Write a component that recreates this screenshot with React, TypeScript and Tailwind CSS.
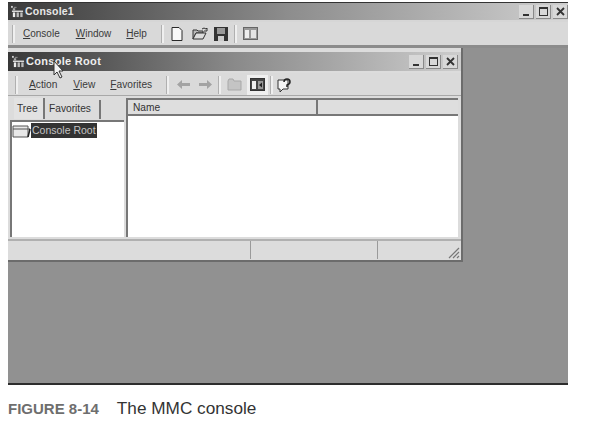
function AppIcon({ className }: { className?: string }) {
  return (
    <svg viewBox="0 0 14 14" className={className} width="13" height="13">
      <rect x="0" y="1" width="2" height="2" fill="#ccc" />
      <rect x="3" y="2" width="3" height="1" fill="#999" />
      <rect x="1" y="6" width="12" height="1.500" fill="#ddd" />
      <rect x="2" y="8" width="2.500" height="5" fill="#eee" />
      <rect x="6" y="8" width="2.500" height="5" fill="#bbb" />
      <rect x="10" y="8" width="2.500" height="5" fill="#bbb" />
      <rect x="2" y="3.500" width="2.500" height="2.500" fill="#aaa" />
    </svg>
  );
}

function WinButtons() {
  return (
    <div className="flex gap-[2px]">
      <div className="w-[15px] h-[14px] bg-[#d8d8d8] border-r border-b border-[#8a8a8a] flex items-end justify-center pb-[2px]">
        <div className="w-[6px] h-[2px] bg-[#333]" />
      </div>
      <div className="w-[15px] h-[14px] bg-[#d8d8d8] border-r border-b border-[#8a8a8a] flex items-center justify-center">
        <div className="w-[9px] h-[9px] border border-t-2 border-[#333]" />
      </div>
      <div className="w-[15px] h-[14px] bg-[#d8d8d8] border-r border-b border-[#8a8a8a] flex items-center justify-center">
        <svg width="9" height="9" viewBox="0 0 9 9"><path d="M1 1l7 7M8 1l-7 7" stroke="#333" strokeWidth="1.800" /></svg>
      </div>
    </div>
  );
}

function Grip() {
  return <div className="w-[2px] h-[18px] bg-[#efefef] border-l border-[#b0b0b0] box-content" />;
}

function Menu({ first, rest, className }: { first: string; rest: string; className?: string }) {
  return (
    <span className={className}>
      <span className="underline">{first}</span>
      {rest}
    </span>
  );
}

function SplitIcon({ dark }: { dark?: boolean }) {
  return (
    <svg width="15" height="13" viewBox="0 0 15 13">
      <rect x="0.500" y="0.500" width="14" height="12" fill={dark ? "#444" : "#999"} stroke={dark ? "#333" : "#666"} />
      <rect x="2" y="3" width="4" height="8" fill="#eee" />
      <rect x="8" y="3" width="5" height="8" fill={dark ? "#999" : "#e4e4e4"} />
      {dark && <path d="M9 7l3-2.500v5z" fill="#222" />}
    </svg>
  );
}

export default function App() {
  return (
    <div className="w-[602px] h-[422px] bg-white font-['Liberation_Sans',sans-serif] overflow-hidden relative">
      <div className="ml-2 mt-[2px] w-[560px] h-[383px] flex flex-col bg-[#d6d6d6]">
        {/* Main title bar */}
        <div className="h-[18px] shrink-0 bg-gradient-to-r from-[#3b3b3b] via-[#8d8d8d] to-[#cfcfcf] flex items-center justify-between pl-[3px] border-t border-[#333]">
          <div className="flex items-center gap-[1px]">
            <AppIcon />
            <span className="text-[10.500px] font-bold text-[#e8e8e8] leading-none tracking-[0.2px]">Console1</span>
          </div>
          <WinButtons />
        </div>
        {/* Main menu and toolbar */}
        <div className="h-[23px] mt-[2px] shrink-0 bg-[#d9d9d9] flex items-center text-[10px] text-[#3a3a3a] pl-[4px]">
          <Grip />
          <Menu first="C" rest="onsole" className="ml-[8px]" />
          <Menu first="W" rest="indow" className="ml-[16px]" />
          <Menu first="H" rest="elp" className="ml-[15px]" />
          <div className="ml-[14px]"><Grip /></div>
          <svg className="ml-[7px]" width="12" height="14" viewBox="0 0 12 14">
            <path d="M1 .5h7l3 3v10H1z" fill="#f8f8f8" stroke="#2a2a2a" />
          </svg>
          <svg className="ml-[9px]" width="16" height="13" viewBox="0 0 16 13">
            <path d="M1 3h4l1 1h5v2H4l-3 6z" fill="#bbb" stroke="#333" />
            <path d="M1 12l3-6h10l-3 6z" fill="#ddd" stroke="#333" />
            <path d="M10 2q2-2 4 0l1-1v3h-3" fill="none" stroke="#333" />
          </svg>
          <svg className="ml-[6px]" width="14" height="14" viewBox="0 0 14 14">
            <rect width="14" height="14" fill="#333" />
            <rect x="3" y="1" width="8" height="6" fill="#999" />
            <rect x="4" y="9" width="6" height="5" fill="#ccc" />
          </svg>
          <div className="ml-[6px]"><Grip /></div>
          <div className="ml-[6px]"><SplitIcon /></div>
        </div>
        <div className="h-[3px] shrink-0 bg-[#8c8c8c]" />
        {/* MDI client */}
        <div className="flex-1 bg-[#919191] border-b-2 border-[#2d2d2d] relative">
          {/* Child window */}
          <div className="w-[455px] h-[214px] bg-[#dcdcdc] border-r-2 border-b-2 border-[#6c6c6c] flex flex-col pt-[4px]">
            <div className="h-[19px] shrink-0 bg-gradient-to-r from-[#383838] via-[#8a8a8a] to-[#cdcdcd] flex items-center justify-between pl-[4px] pr-[3px]">
              <div className="flex items-center gap-[1px]">
                <AppIcon />
                <span className="text-[11px] font-bold text-[#eeeeee] leading-none tracking-[0.3px]">Console Root</span>
              </div>
              <WinButtons />
            </div>
            <div className="h-[23px] mt-[2px] pt-[1px] shrink-0 bg-[#dadada] flex items-center text-[10.200px] text-[#3a3a3a] pl-[7px] border-b border-[#a8a8a8]">
              <Grip />
              <Menu first="A" rest="ction" className="ml-[11px]" />
              <Menu first="V" rest="iew" className="ml-[16px]" />
              <Menu first="F" rest="avorites" className="ml-[15px]" />
              <div className="ml-[14px]"><Grip /></div>
              <svg className="ml-[8px]" width="13" height="9" viewBox="0 0 13 9"><path d="M0 4.500L5 0v3h8v3H5v3z" fill="#a3a3a3" /></svg>
              <svg className="ml-[9px]" width="13" height="9" viewBox="0 0 13 9"><path d="M13 4.500L8 0v3H0v3h8v3z" fill="#a3a3a3" /></svg>
              <div className="ml-[6px]"><Grip /></div>
              <svg className="ml-[6px]" width="15" height="13" viewBox="0 0 15 13">
                <path d="M1 3l1-2h4l1 2h7v9H1z" fill="#c4c4c4" stroke="#a8a8a8" />
              </svg>
              <div className="ml-[5px] w-[21px] h-[20px] bg-[#efefef] flex items-center justify-center"><SplitIcon dark /></div>
              <div className="ml-[2px]"><Grip /></div>
              <svg className="ml-[4px]" width="16" height="16" viewBox="0 0 16 16">
                <path d="M1 3h10v9H6l-3 3v-3H1z" fill="#f4f4f4" stroke="#333" />
                <path d="M7 5q0-3 3-3t3 3q0 2-3 3v2" fill="none" stroke="#222" strokeWidth="1.500" />
              </svg>
            </div>
            <div className="flex-1 flex min-h-0 pl-[2px] pr-[3px]">
              {/* Left pane */}
              <div className="w-[114px] shrink-0 flex flex-col">
                <div className="h-[23px] flex items-end text-[10.200px] text-[#333] pl-[4px] shrink-0">
                  <span className="h-[21px] w-[31px] pt-[3px] pl-[3px] border-r-2 border-[#777] bg-[#e2e2e2]">Tree</span>
                  <span className="h-[19px] w-[56px] pt-[1px] pl-[4px] border-r-2 border-[#777]">Favorites</span>
                </div>
                <div className="flex-1 bg-white border-t-2 border-l-2 border-[#777] mt-[1px] pt-[1px]">
                  <div className="flex items-center">
                    <svg width="19" height="14" viewBox="0 0 19 14" className="shrink-0">
                      <path d="M1 2h15v11H1z" fill="#e8e8e8" stroke="#555" />
                      <path d="M1 5h17" stroke="#555" />
                      <path d="M16 13l2-8" stroke="#222" strokeWidth="1.500" />
                    </svg>
                    <span className="h-[15px] px-[1px] bg-[#333] text-[#c4c4c4] text-[10.500px] leading-[15px]">Console Root</span>
                  </div>
                </div>
              </div>
              {/* Right pane */}
              <div className="flex-1 ml-[2px] mt-[2px] flex flex-col border-t-2 border-l-2 border-[#777] min-w-0">
                <div className="h-[16px] shrink-0 flex text-[10.200px] text-[#333] border-b-2 border-[#777] bg-[#dedede]">
                  <span className="w-[190px] pl-[5px] border-r-2 border-[#777] leading-[15px]">Name</span>
                </div>
                <div className="flex-1 bg-white" />
              </div>
            </div>
            <div className="h-[20px] mt-[2px] shrink-0 mb-[1px] flex gap-[2px] px-[1px] bg-[#dcdcdc] border-t-2 border-[#b0b0b0]">
              <div className="w-[242px] border-r border-[#9a9a9a]" />
              <div className="w-[125px] border-r border-[#9a9a9a]" />
              <div className="flex-1 flex items-end justify-end">
                <svg width="12" height="12" viewBox="0 0 12 12">
                  <path d="M11 1L1 11M11 5l-6 6M11 9l-2 2" stroke="#777" strokeWidth="1.200" />
                </svg>
              </div>
            </div>
          </div>
        </div>
      </div>
      {/* Mouse pointer */}
      <svg className="absolute left-[53px] top-[60px]" width="13" height="19" viewBox="0 0 13 19">
        <path d="M1 1v14l3-3 3 6 2-1-3-6h4z" fill="#f2f2f2" stroke="#333" />
      </svg>
      {/* Caption */}
      <div className="mt-[11px] ml-2 flex items-baseline whitespace-nowrap">
        <span className="text-[15px] font-bold text-[#6e6e6e]">FIGURE 8-14</span>
        <span className="ml-[18px] text-[17.200px] text-[#333]">The MMC console</span>
      </div>
    </div>
  );
}
